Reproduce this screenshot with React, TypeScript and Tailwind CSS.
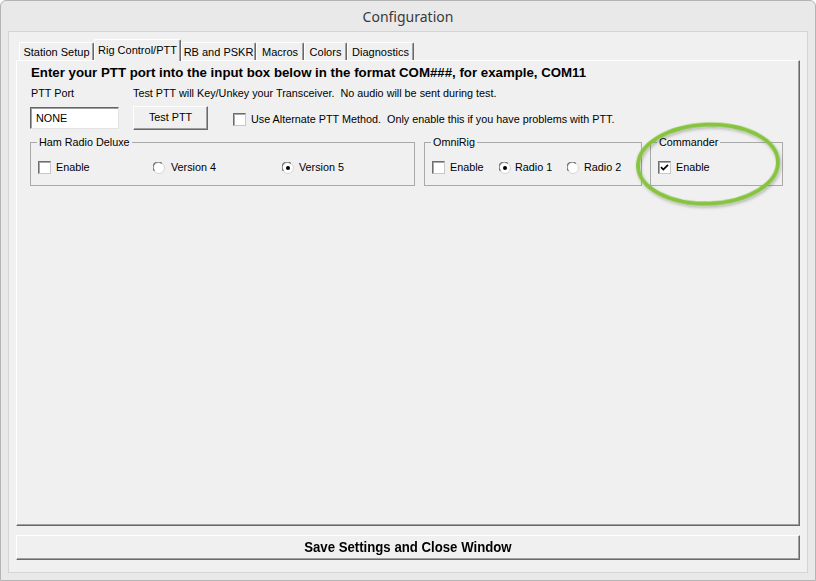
import React from "react";

const ui = { fontFamily: '"Liberation Sans", Arial, sans-serif' };

function CheckBox({ checked = false }: { checked?: boolean }) {
  return (
    <span className="w-[13px] h-[13px] shrink-0 bg-white border border-t-[#6e6e6e] border-l-[#6e6e6e] border-r-[#c8c8c8] border-b-[#c8c8c8] shadow-[inset_1px_1px_0_#a8a8a8] flex items-center justify-center">
      {checked && (
        <svg width="9" height="9" viewBox="0 0 9 9">
          <path d="M1 4.2 L3.3 6.6 L8 1.8" fill="none" stroke="#000" strokeWidth="1.7" />
        </svg>
      )}
    </span>
  );
}

function Radio({ checked = false }: { checked?: boolean }) {
  return (
    <svg width="12" height="12" viewBox="0 0 12 12" className="shrink-0">
      <circle cx="6" cy="6" r="5.5" fill="#fff" stroke="#d4d4d4" strokeWidth="1" />
      <path d="M1.5 8.8 A5 5 0 0 1 8.8 1.5" fill="none" stroke="#6e6e6e" strokeWidth="1.1" />
      {checked && <circle cx="6" cy="6" r="2" fill="#000" />}
    </svg>
  );
}

function Tab({ label, w, selected = false }: { label: string; w: string; selected?: boolean }) {
  return (
    <div
      className={
        "shrink-0 flex justify-center bg-[#f0f0f0] border-l border-t border-r border-l-white border-t-white border-r-[#696969] rounded-t-[2px] shadow-[inset_-1px_0_0_#a0a0a0] text-[11px] text-black " +
        w +
        (selected ? " h-[22px] pt-[2px] relative z-10 -mb-px" : " h-[18px] pt-[1px]")
      }
    >
      {label}
    </div>
  );
}

function Group({ title, w, children }: { title: string; w: string; children: React.ReactNode }) {
  return (
    <fieldset className={"border border-[#a9a9a9] shrink-0 " + w}>
      <legend className="ml-[6px] px-[2px] text-[10.8px] leading-[13px]">{title}</legend>
      <div className="h-[36px] flex items-center pl-[7px] pt-[1px] text-[10.8px]">{children}</div>
    </fieldset>
  );
}

export default function App() {
  return (
    <div
      className="relative w-[816px] h-[581px] bg-[#e9e9e9] border border-[#b4b4b4] rounded-t-[6px] flex flex-col overflow-hidden"
      style={ui}
    >
      <div
        className="h-[30px] flex items-center justify-center text-[14px] text-[#3a3a3a] pt-[1px]"
        style={{ fontFamily: '"Noto Sans", "Open Sans", sans-serif' }}
      >
        Configuration
      </div>
      <div className="mx-[7px] h-[542px] bg-[#f0f0f0] border border-[#d4d4d4] flex flex-col pt-[7px] pb-[12px] px-[7px]">
        <div className="h-[21px] flex items-end pl-[3px]">
          <Tab label="Station Setup" w="w-[75px]" />
          <Tab label="Rig Control/PTT" w="w-[87px]" selected />
          <Tab label="RB and PSKR" w="w-[75px]" />
          <Tab label="Macros" w="w-[48px]" />
          <Tab label="Colors" w="w-[43px]" />
          <Tab label="Diagnostics" w="w-[67px]" />
        </div>
        <div className="flex-1 border-l border-t border-r border-b border-l-white border-t-white border-r-[#696969] border-b-[#696969] shadow-[inset_-1px_-1px_0_#a0a0a0] pl-[14px] pt-[1px] flex flex-col">
          <div className="h-[17px] leading-[17px] text-[13.25px] font-bold text-black mt-[2px]">
            Enter your PTT port into the input box below in the format COM###, for example, COM11
          </div>
          <div className="mt-[6px] h-[13px] leading-[13px] flex text-[10.8px] text-black">
            <span className="w-[102px]">PTT Port</span>
            <span className="whitespace-pre">Test PTT will Key/Unkey your Transceiver.  No audio will be sent during test.</span>
          </div>
          <div className="mt-[6px] h-[24px] flex items-start text-[10.8px] text-black">
            <div className="-ml-px mt-[1px] w-[89px] h-[22px] bg-white border border-t-[#646464] border-l-[#646464] border-r-[#e3e3e3] border-b-[#e3e3e3] shadow-[inset_1px_1px_0_#a0a0a0] pl-[5px] flex items-center">
              NONE
            </div>
            <div className="ml-[14px] w-[75px] h-[24px] bg-[#f0f0f0] border border-t-white border-l-white border-r-[#696969] border-b-[#696969] shadow-[inset_-1px_-1px_0_#a0a0a0] flex items-center justify-center pb-[1px]">
              Test PTT
            </div>
            <div className="ml-[25px] h-[24px] flex items-center pt-[2px]">
              <CheckBox />
              <span className="ml-[5px] whitespace-pre">Use Alternate PTT Method.  Only enable this if you have problems with PTT.</span>
            </div>
          </div>
          <div className="mt-[6px] -ml-px flex text-black">
            <Group title="Ham Radio Deluxe" w="w-[385px]">
              <div className="w-[115px] flex items-center">
                <CheckBox />
                <span className="ml-[5px]">Enable</span>
              </div>
              <div className="w-[129px] flex items-center">
                <Radio />
                <span className="ml-[6px]">Version 4</span>
              </div>
              <div className="flex items-center">
                <Radio checked />
                <span className="ml-[5px]">Version 5</span>
              </div>
            </Group>
            <div className="w-[9px]" />
            <Group title="OmniRig" w="w-[218px]">
              <div className="w-[67px] flex items-center">
                <CheckBox />
                <span className="ml-[5px]">Enable</span>
              </div>
              <div className="w-[68px] flex items-center">
                <Radio checked />
                <span className="ml-[4px]">Radio 1</span>
              </div>
              <div className="flex items-center">
                <Radio />
                <span className="ml-[5px]">Radio 2</span>
              </div>
            </Group>
            <div className="w-[8px]" />
            <Group title="Commander" w="w-[133px]">
              <div className="flex items-center">
                <CheckBox checked />
                <span className="ml-[5px]">Enable</span>
              </div>
            </Group>
          </div>
        </div>
        <div className="mt-[9px] h-[25px] bg-[#f0f0f0] border border-t-white border-l-white border-r-[#696969] border-b-[#696969] shadow-[inset_-1px_-1px_0_#a0a0a0] flex items-center justify-center">
          <span className="inline-block text-[15px] font-bold text-black scale-x-[0.88]">Save Settings and Close Window</span>
        </div>
      </div>
      <svg
        className="absolute left-[630px] top-[117px] pointer-events-none"
        width="156"
        height="96"
        viewBox="0 0 156 96"
      >
        <defs>
          <filter id="sh" x="-20%" y="-20%" width="140%" height="140%">
            <feDropShadow dx="1" dy="2" stdDeviation="1.5" floodColor="#000" floodOpacity="0.25" />
          </filter>
        </defs>
        <ellipse cx="77" cy="46" rx="70" ry="39.5" fill="none" stroke="#86c440" strokeWidth="4" filter="url(#sh)" transform="rotate(-2 77 46)" />
      </svg>
    </div>
  );
}
